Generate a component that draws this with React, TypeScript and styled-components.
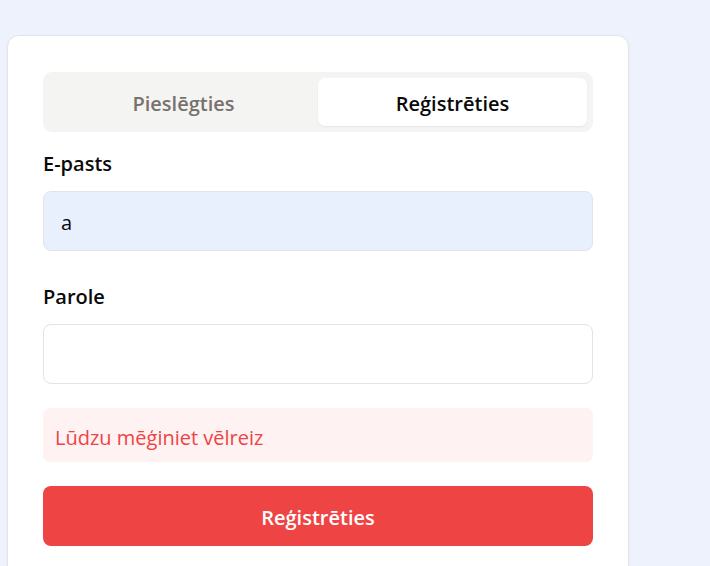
import React, { useState } from "react";
import styled, { createGlobalStyle } from "styled-components";

const GlobalStyle = createGlobalStyle`
  html, body {
    margin: 0;
    padding: 0;
    background: #edf2fd;
    font-family: "Open Sans", "Noto Sans", sans-serif;
  }
  * { box-sizing: border-box; }
`;

const Page = styled.div`
  padding: 35px 0 0 7px;
  min-height: 566px;
`;

const Card = styled.div`
  width: 622px;
  background: #ffffff;
  border: 1px solid #e3e5ea;
  border-radius: 12px;
  box-shadow: 0 1px 3px rgba(0, 0, 0, 0.05);
  padding: 36px 35px 36px;
  display: flex;
  flex-direction: column;
`;

const Tabs = styled.div`
  display: grid;
  grid-template-columns: 1fr 1fr;
  padding: 6px;
  background: #f4f4f3;
  border-radius: 9px;
  margin-bottom: 18px;
`;

const Tab = styled.button<{ $active?: boolean }>`
  height: 48px;
  border: none;
  border-radius: 7px;
  padding: 4px 0 0;
  font-family: inherit;
  font-size: 20px;
  line-height: 28px;
  font-weight: 600;
  cursor: pointer;
  background: ${(p) => (p.$active ? "#ffffff" : "transparent")};
  color: ${(p) => (p.$active ? "#0a0a0a" : "#78716c")};
  box-shadow: ${(p) => (p.$active ? "0 1px 2px rgba(0,0,0,0.06)" : "none")};
`;

const Field = styled.div<{ $gap?: number }>`
  display: flex;
  flex-direction: column;
  margin-bottom: ${(p) => p.$gap ?? 0}px;
`;

const Label = styled.label`
  font-size: 20px;
  line-height: 28px;
  font-weight: 600;
  color: #0a0a0a;
  margin-bottom: 13px;
`;

const Input = styled.input<{ $filled?: boolean }>`
  height: 60px;
  width: 100%;
  border: 1px solid #e3e3e6;
  border-radius: 8px;
  background: ${(p) => (p.$filled ? "#e8f0fe" : "#ffffff")};
  padding: 3px 17px 0;
  font-family: inherit;
  font-size: 20px;
  color: #0a0a0a;
  outline: none;
`;

const ErrorBox = styled.div`
  background: #fef2f2;
  color: #ef4444;
  border-radius: 7px;
  padding: 16px 12px 10px;
  font-size: 20px;
  line-height: 28px;
  margin-bottom: 24px;
`;

const Submit = styled.button`
  height: 60px;
  width: 100%;
  border: none;
  border-radius: 8px;
  padding: 3px 0 0;
  background: #ef4444;
  color: #ffffff;
  font-family: inherit;
  font-size: 20px;
  line-height: 28px;
  font-weight: 600;
  cursor: pointer;
`;

export default function App() {
  const [email, setEmail] = useState("a");
  const [password, setPassword] = useState("");
  return (
    <>
      <GlobalStyle />
      <Page>
        <Card>
          <Tabs>
            <Tab>Pieslēgties</Tab>
            <Tab $active>Reģistrēties</Tab>
          </Tabs>
          <Field $gap={32}>
            <Label>E-pasts</Label>
            <Input
              $filled
              value={email}
              onChange={(e) => setEmail(e.target.value)}
            />
          </Field>
          <Field $gap={24}>
            <Label>Parole</Label>
            <Input
              type="password"
              value={password}
              onChange={(e) => setPassword(e.target.value)}
            />
          </Field>
          <ErrorBox>Lūdzu mēģiniet vēlreiz</ErrorBox>
          <Submit>Reģistrēties</Submit>
        </Card>
      </Page>
    </>
  );
}
